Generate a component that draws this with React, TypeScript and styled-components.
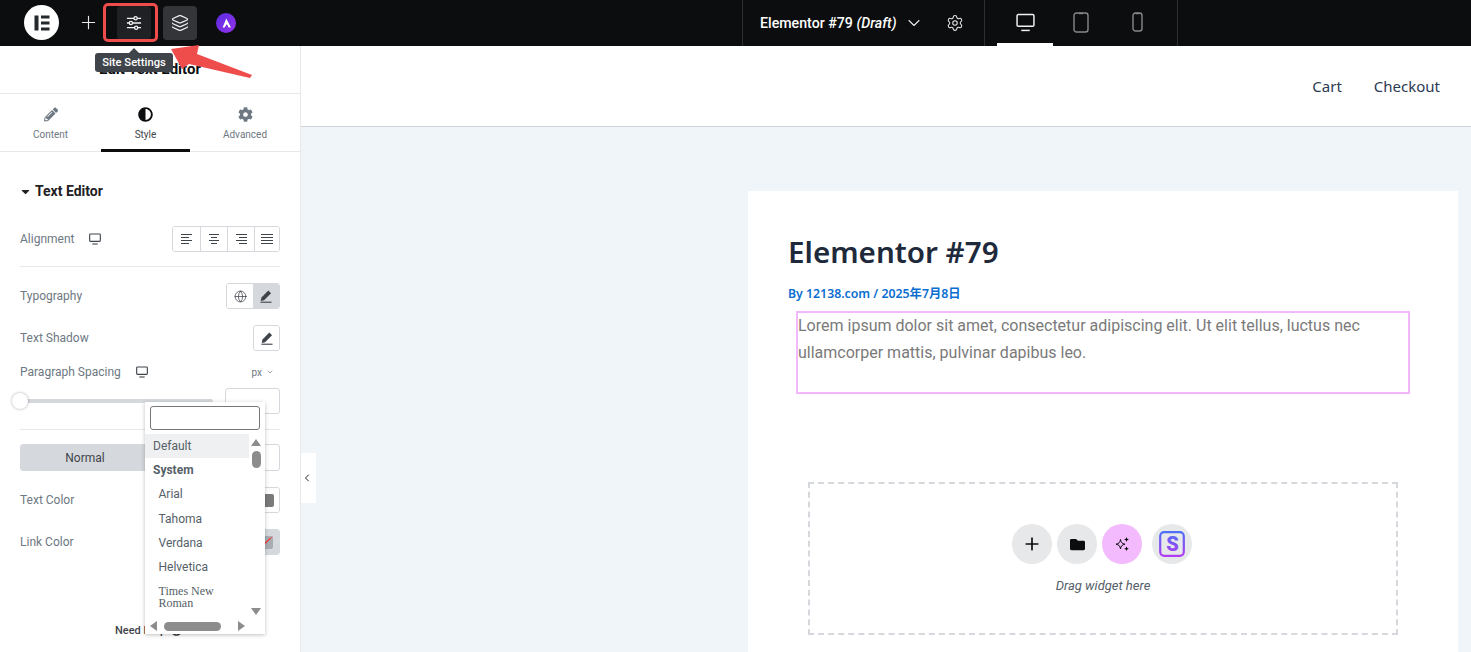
import React from 'react';
import styled, { createGlobalStyle } from 'styled-components';
import { Globe, Layers, Plus, Settings, ChevronDown, ChevronLeft } from 'lucide-react';
import { FaAdjust, FaCog, FaFolder, FaPencilAlt, FaCaretDown, FaQuestionCircle } from 'react-icons/fa';

const GlobalStyle = createGlobalStyle`
  html, body {
    margin: 0;
    height: 652px;
    overflow: hidden;
    background: #fff;
    font-family: Roboto, "Liberation Sans", sans-serif;
  }
  * { box-sizing: border-box; }
`;

const Page = styled.div`
  position: relative;
  width: 1471px;
  height: 652px;
  overflow: hidden;
  display: flex;
  flex-direction: column;
`;

const TopBar = styled.header`
  height: 46px;
  flex: none;
  background: #0c0d0e;
  display: flex;
  align-items: center;
  color: #fff;
`;

const ToolGroup = styled.div`
  width: 742px;
  height: 100%;
  display: flex;
  align-items: center;
  padding: 0 0 1px 24px;
`;

const LogoCircle = styled.div`
  width: 35px;
  height: 35px;
  border-radius: 50%;
  background: #fff;
  display: flex;
  align-items: center;
  justify-content: center;
  margin-right: 18px;
`;

const PlusButton = styled.div`
  width: 22px;
  display: flex;
  justify-content: center;
  color: #e6e8ea;
  margin-right: 18px;
`;

const ToolButton = styled.div<{ $bg: string }>`
  width: 34px;
  height: 34px;
  border-radius: 4px;
  background: ${(p) => p.$bg};
  display: flex;
  align-items: center;
  justify-content: center;
  margin-right: 12px;
  color: #f1f2f3;
`;

const AccentBadge = styled.div`
  width: 20px;
  height: 20px;
  border-radius: 50%;
  margin-left: 7px;
  background: linear-gradient(135deg, #5b2be0, #9333ea);
  display: flex;
  align-items: center;
  justify-content: center;
`;

const TitleGroup = styled.div`
  width: 242px;
  height: 100%;
  border-left: 1px solid #2d2f32;
  display: flex;
  align-items: center;
  padding: 0 0 1px 17px;
`;

const DocTitle = styled.div`
  font-size: 14.2px;
  font-weight: 500;
  white-space: nowrap;
  color: #fff;
  em { font-style: italic; }
`;

const TitleChevron = styled(ChevronDown)`
  flex: none;
  margin-left: 7px;
  color: #e6e8ea;
`;

const TitleGear = styled(Settings)`
  flex: none;
  margin-left: 22px;
  color: #e6e8ea;
`;

const DeviceGroup = styled.div`
  width: 194px;
  height: 100%;
  border-left: 1px solid #2d2f32;
  border-right: 1px solid #2d2f32;
  display: flex;
  padding-left: 12px;
`;

const DeviceTab = styled.div<{ $active?: boolean }>`
  width: 56px;
  height: 100%;
  display: flex;
  align-items: center;
  justify-content: center;
  color: ${(p) => (p.$active ? '#f1f2f3' : '#85888c')};
  border-bottom: 3px solid ${(p) => (p.$active ? '#fff' : 'transparent')};
  padding-top: 1px;
`;

const Body = styled.div`
  flex: 1;
  display: flex;
  min-height: 0;
`;

const Panel = styled.aside`
  position: relative;
  width: 301px;
  flex: none;
  background: #fff;
  border-right: 1px solid #e6e8ea;
`;

const PanelHeader = styled.div`
  height: 48px;
  border-bottom: 1px solid #e6e8ea;
  display: flex;
  align-items: center;
  justify-content: center;
  font-size: 15px;
  font-weight: 700;
  color: #0c0d0e;
  padding-bottom: 2px;
`;

const Tabs = styled.div`
  height: 58px;
  display: flex;
  border-bottom: 1px solid #e6e8ea;
`;

const Tab = styled.div<{ $active?: boolean; $w: number }>`
  width: ${(p) => p.$w}px;
  display: flex;
  flex-direction: column;
  align-items: center;
  padding-top: 13px;
  font-size: 10px;
  color: ${(p) => (p.$active ? '#3f444b' : '#6d7882')};
  border-bottom: 3px solid ${(p) => (p.$active ? '#0c0d0e' : 'transparent')};
  height: 58px;
  svg { color: ${(p) => (p.$active ? '#0c0d0e' : '#6d7882')}; height: 15px; margin-bottom: 7px; }
`;

const Section = styled.div`
  padding: 28px 20px 0;
`;

const SectionTitle = styled.div`
  height: 22px;
  display: flex;
  align-items: center;
  gap: 3.5px;
  font-size: 14px;
  font-weight: 700;
  color: #1f2124;
  svg { margin-left: -1.5px; }
`;

const Row = styled.div<{ $top: number }>`
  height: 26px;
  margin-top: ${(p) => p.$top}px;
  display: flex;
  align-items: center;
  justify-content: space-between;
`;

const LabelRow = styled.div<{ $top: number }>`
  height: 20px;
  margin-top: ${(p) => p.$top}px;
  display: flex;
  align-items: center;
  justify-content: space-between;
`;

const Label = styled.div`
  font-size: 12px;
  color: #6d7882;
  display: flex;
  align-items: center;
  gap: 15px;
`;

const UnitPick = styled.div`
  font-size: 10px;
  color: #6d7882;
  padding-right: 6px;
  display: flex;
  align-items: center;
  gap: 4px;
`;

const Divider = styled.div<{ $top: number }>`
  height: 1px;
  background: #e6e8ea;
  margin-top: ${(p) => p.$top}px;
`;

const ButtonGroup = styled.div`
  display: flex;
  height: 26px;
  border: 1px solid #d5d8dc;
  border-radius: 3px;
  overflow: hidden;
`;

const GroupButton = styled.div<{ $w: number; $on?: boolean; $sep?: boolean }>`
  width: ${(p) => p.$w}px;
  height: 100%;
  display: flex;
  align-items: center;
  justify-content: center;
  background: ${(p) => (p.$on ? '#d5d8dc' : '#fff')};
  border-left: ${(p) => (p.$sep ? '1px solid #d5d8dc' : 'none')};
  color: #3f444b;
`;

const SliderRow = styled.div`
  margin-top: 6px;
  height: 26px;
  display: flex;
  align-items: center;
  justify-content: space-between;
`;

const SliderTrack = styled.div`
  position: relative;
  width: 193px;
  height: 4px;
  border-radius: 2px;
  background: #d5d8dc;
`;

const SliderThumb = styled.div`
  position: absolute;
  left: -8px;
  top: -6px;
  width: 16px;
  height: 16px;
  border-radius: 50%;
  background: #fff;
  box-shadow: 0 0 3px rgba(0, 0, 0, 0.35);
`;

const NumberBox = styled.div`
  width: 55px;
  height: 26px;
  border: 1px solid #d5d8dc;
  border-radius: 3px;
`;

const StateTabs = styled.div`
  margin-top: 14px;
  height: 27px;
  display: flex;
`;

const StateTab = styled.div<{ $on?: boolean }>`
  flex: 1;
  display: flex;
  align-items: center;
  justify-content: center;
  font-size: 12px;
  color: ${(p) => (p.$on ? '#3f444b' : '#6d7882')};
  background: ${(p) => (p.$on ? '#d5d8dc' : '#fff')};
  border: 1px solid #d5d8dc;
  border-radius: ${(p) => (p.$on ? '3px 0 0 3px' : '0 3px 3px 0')};
`;

const Swatch = styled.div<{ $slashed?: boolean }>`
  width: 14px;
  height: 13px;
  border-radius: 2px;
  background: ${(p) =>
    p.$slashed
      ? 'linear-gradient(to top left, #a9adb2 47%, #ef4444 47%, #ef4444 53%, #a9adb2 53%)'
      : '#7a7a7a'};
`;

const HelpRow = styled.div`
  margin-top: 67px;
  height: 16px;
  margin-left: 95px;
  display: flex;
  align-items: center;
  gap: 5px;
  font-size: 11px;
  font-weight: 500;
  color: #3f444b;
  white-space: nowrap;
`;

const FontMenu = styled.div`
  position: absolute;
  left: 145px;
  top: 356px;
  width: 120px;
  height: 232px;
  background: #fff;
  box-shadow: 0 1px 4px rgba(0, 0, 0, 0.25);
  font-size: 12px;
  color: #556068;
  display: flex;
  flex-direction: column;
`;

const MenuSearch = styled.div`
  flex: none;
  margin: 4px 5px;
  height: 24px;
  border: 1px solid #767676;
  border-radius: 3px;
  background: #fff;
`;

const MenuBody = styled.div`
  flex: 1;
  min-height: 0;
  display: flex;
`;

const MenuList = styled.div`
  width: 104px;
  overflow: hidden;
`;

const MenuItem = styled.div<{ $on?: boolean; $head?: boolean; $indent?: boolean }>`
  height: 24.2px;
  display: flex;
  align-items: center;
  padding-left: ${(p) => (p.$indent ? 13.5 : 8)}px;
  background: ${(p) => (p.$on ? '#eff0f2' : 'transparent')};
  font-weight: ${(p) => (p.$head ? 700 : 400)};
`;

const SerifItem = styled.div`
  padding: 6px 0 0 13.5px;
  font-family: "Liberation Serif", serif;
  font-size: 12px;
  line-height: 12px;
  width: 80px;
`;

const VScroll = styled.div`
  width: 16px;
  display: flex;
  flex-direction: column;
  align-items: center;
  padding: 5px 2px 3px 0;
`;

const VThumb = styled.div`
  width: 9px;
  height: 17px;
  border-radius: 5px;
  background: #8c8c8c;
  margin-top: 5px;
`;

const Triangle = styled.div<{ $dir: 'up' | 'down' | 'left' | 'right' }>`
  width: 0;
  height: 0;
  flex: none;
  border-style: solid;
  border-color: transparent;
  ${(p) => {
    if (p.$dir === 'up') return 'border-width: 0 5px 7px; border-bottom-color: #8c8c8c;';
    if (p.$dir === 'down') return 'border-width: 7px 5px 0; border-top-color: #8c8c8c;';
    if (p.$dir === 'left') return 'border-width: 5px 7px 5px 0; border-right-color: #8c8c8c;';
    return 'border-width: 5px 0 5px 7px; border-left-color: #8c8c8c;';
  }}
`;

const Spacer = styled.div`
  flex: 1;
`;

const HScroll = styled.div`
  flex: none;
  height: 16px;
  display: flex;
  align-items: center;
  padding: 0 20px 0 5px;
  gap: 7px;
`;

const HThumb = styled.div`
  width: 57px;
  height: 9px;
  border-radius: 5px;
  background: #8c8c8c;
`;

const Preview = styled.main`
  position: relative;
  flex: 1;
  min-width: 0;
  display: flex;
  flex-direction: column;
  background: #f0f5f9;
`;

const CollapseTab = styled.div`
  position: absolute;
  left: 0;
  top: 407px;
  width: 15px;
  height: 50px;
  background: #fff;
  display: flex;
  align-items: center;
  justify-content: center;
  padding-right: 3px;
  color: #26292c;
`;

const SiteHeader = styled.div`
  height: 81px;
  flex: none;
  background: #fff;
  border-bottom: 1px solid #d1d5d9;
  display: flex;
  align-items: center;
  justify-content: flex-end;
  padding-right: 31px;
  gap: 32px;
  font-family: "Noto Sans", "Open Sans", sans-serif;
  font-size: 15px;
  color: #2c3a52;
`;

const Canvas = styled.div`
  flex: 1;
  min-height: 0;
  padding: 64px 13px 0 447px;
`;

const Card = styled.article`
  background: #fff;
  height: 100%;
  padding: 41px 40px 0;
`;

const PostTitle = styled.h1`
  margin: 0;
  height: 40px;
  line-height: 40px;
  font-family: "Noto Sans", "Open Sans", sans-serif;
  font-size: 29.6px;
  font-weight: 600;
  color: #1e293b;
  white-space: nowrap;
`;

const PostMeta = styled.div`
  margin-top: 12px;
  height: 20px;
  line-height: 20px;
  font-family: "Noto Sans", "Noto Sans CJK SC", sans-serif;
  font-size: 12.3px;
  font-weight: 600;
  color: #0a6ed1;
`;

const TextWidget = styled.div`
  margin: 7px 0 0 8px;
  width: 614px;
  height: 83px;
  padding: 1px 0 0 2px;
  box-shadow: inset 0 0 0 2px #f3b8fb;
  font-size: 16px;
  line-height: 27px;
  color: #7a7a7a;
`;

const DropZone = styled.div`
  margin: 88px 0 0 20px;
  width: 590px;
  height: 153px;
  border: 2px dashed #d5d8dc;
  display: flex;
  flex-direction: column;
  align-items: center;
  padding-top: 40px;
`;

const DropButtons = styled.div`
  display: flex;
  align-items: center;
  margin-left: -2px;
`;

const RoundButton = styled.div<{ $pink?: boolean; $gap?: number }>`
  width: 40px;
  height: 40px;
  border-radius: 50%;
  margin-left: ${(p) => p.$gap ?? 0}px;
  background: ${(p) => (p.$pink ? '#f3bafd' : '#e6e8ea')};
  color: #0c0d0e;
  display: flex;
  align-items: center;
  justify-content: center;
`;

const DropHint = styled.div`
  margin-top: 14px;
  font-size: 13px;
  line-height: 16px;
  font-style: italic;
  color: #556068;
`;

const Tooltip = styled.div`
  position: absolute;
  left: 95px;
  top: 53px;
  height: 19px;
  width: 78px;
  border-radius: 3px;
  background: #3f444b;
  color: #fff;
  font-size: 11.2px;
  font-weight: 500;
  display: flex;
  align-items: center;
  justify-content: center;
  white-space: nowrap;
  &::before {
    content: '';
    position: absolute;
    left: 34px;
    top: -5px;
    border-style: solid;
    border-width: 0 5px 5px;
    border-color: transparent transparent #3f444b;
  }
`;

const Highlight = styled.div`
  position: absolute;
  left: 103px;
  top: 3px;
  width: 55px;
  height: 39px;
  border: 3px solid #ef4c4c;
  border-radius: 5px;
`;

const ArrowMark = styled.svg`
  position: absolute;
  left: 165px;
  top: 40px;
  width: 95px;
  height: 42px;
`;

const ElementorMark = () => (
  <svg width="16" height="16" viewBox="0 0 16 16" fill="#26292c">
    <rect x="0.5" y="0.5" width="4" height="15" />
    <rect x="7" y="0.5" width="8.5" height="3" />
    <rect x="7" y="6.5" width="8.5" height="3" />
    <rect x="7" y="12.5" width="8.5" height="3" />
  </svg>
);

const SlidersMark = () => (
  <svg width="16" height="16" viewBox="0 0 17 17" fill="none" stroke="#f1f2f3" strokeWidth="1.4">
    <path d="M1 3.5h7.5M12 3.5h4M1 8.5h2.5M7 8.5h9M1 13.5h8M12.5 13.5h3.5" />
    <circle cx="10.2" cy="3.5" r="1.7" />
    <circle cx="5.2" cy="8.5" r="1.7" />
    <circle cx="10.8" cy="13.5" r="1.7" />
  </svg>
);

const MonitorMark = ({ size = 12, color = '#3f444b', width = 1.2 }: { size?: number; color?: string; width?: number }) => (
  <svg width={size} height={size} viewBox="0 0 18 18" fill="none" stroke={color} strokeWidth={width * 1.4}>
    <rect x="1" y="1.5" width="16" height="11" rx="1.2" />
    <path d="M5 16.5h8" />
  </svg>
);

const DeviceMark = ({ w, h }: { w: number; h: number }) => (
  <svg width={w} height={h} viewBox={`0 0 ${w} ${h}`} fill="none" stroke="currentColor" strokeWidth="1.4">
    <rect x="1" y="1" width={w - 2} height={h - 2} rx="2.5" />
    <path d={`M${w / 2 - 2} 1.5h4`} />
  </svg>
);

const AlignMark = ({ rows }: { rows: [number, number][] }) => (
  <svg width="12" height="10" viewBox="0 0 12 10" stroke="#3f444b" strokeWidth="1">
    {rows.map(([a, b], i) => (
      <line key={i} x1={a} x2={b} y1={0.5 + i * 3} y2={0.5 + i * 3} />
    ))}
  </svg>
);

const PenLine = () => (
  <svg width="12" height="13" viewBox="0 0 13 14" fill="#3f444b">
    <path d="M9 .6l3 3-7.6 7.5-3.6.8.8-3.7z" />
    <rect x="0.5" y="12.6" width="12" height="1.2" />
  </svg>
);

const SparkMark = () => (
  <svg width="16" height="16" viewBox="0 0 16 16" fill="#0c0d0e">
    <path
      d="M6.5 3.5C7 6.5 8 7.6 11 8.2 8 8.8 7 9.9 6.5 12.9 6 9.9 5 8.8 2 8.2 5 7.6 6 6.5 6.5 3.5z"
      fill="none"
      stroke="#0c0d0e"
      strokeWidth="1"
    />
    <path d="M12.5 1l.7 1.8 1.8.7-1.8.7-.7 1.8-.7-1.8-1.8-.7 1.8-.7zM12.5 10.5l.7 1.6 1.6.7-1.6.7-.7 1.6-.7-1.6-1.6-.7 1.6-.7z" />
  </svg>
);

const StudioMark = () => (
  <svg width="26" height="26" viewBox="0 0 26 26">
    <defs>
      <linearGradient id="studio" x1="0" y1="0" x2="0" y2="1">
        <stop offset="0" stopColor="#4f6ef7" />
        <stop offset="1" stopColor="#b13cf2" />
      </linearGradient>
    </defs>
    <rect x="1.2" y="1.2" width="23.6" height="23.6" rx="4" fill="none" stroke="url(#studio)" strokeWidth="2.2" />
    <text x="13.5" y="20" textAnchor="middle" fontFamily="Roboto, sans-serif" fontWeight="900" fontSize="20" fill="url(#studio)">
      S
    </text>
  </svg>
);

const AccentMark = () => (
  <svg width="12" height="12" viewBox="0 0 12 12" fill="#fff">
    <path d="M6.3 1.5L11 10.5H8.6L6.9 7 4.6 10.5H2.6z" />
  </svg>
);

const fontRows = ['Arial', 'Tahoma', 'Verdana', 'Helvetica'];

export default function App() {
  return (
    <Page>
      <GlobalStyle />
      <TopBar>
        <ToolGroup>
          <LogoCircle>
            <ElementorMark />
          </LogoCircle>
          <PlusButton>
            <Plus size={21} strokeWidth={1.3} />
          </PlusButton>
          <ToolButton $bg="#1f2124">
            <SlidersMark />
          </ToolButton>
          <ToolButton $bg="#333539">
            <Layers size={18} strokeWidth={1.5} />
          </ToolButton>
          <AccentBadge>
            <AccentMark />
          </AccentBadge>
        </ToolGroup>
        <TitleGroup>
          <DocTitle>
            Elementor #79 <em>(Draft)</em>
          </DocTitle>
          <TitleChevron size={20} strokeWidth={1.3} />
          <TitleGear size={18} strokeWidth={1.4} />
        </TitleGroup>
        <DeviceGroup>
          <DeviceTab $active>
            <MonitorMark size={19} color="#f1f2f3" width={1} />
          </DeviceTab>
          <DeviceTab>
            <DeviceMark w={16} h={21} />
          </DeviceTab>
          <DeviceTab>
            <DeviceMark w={11} h={20} />
          </DeviceTab>
        </DeviceGroup>
      </TopBar>

      <Body>
        <Panel>
          <PanelHeader>Edit Text Editor</PanelHeader>
          <Tabs>
            <Tab $w={101}>
              <FaPencilAlt size={14} />
              Content
            </Tab>
            <Tab $w={89} $active>
              <FaAdjust size={15} />
              Style
            </Tab>
            <Tab $w={110}>
              <FaCog size={15} />
              Advanced
            </Tab>
          </Tabs>
          <Section>
            <SectionTitle>
              <FaCaretDown size={13} />
              Text Editor
            </SectionTitle>
            <Row $top={24}>
              <Label>
                Alignment
                <MonitorMark />
              </Label>
              <ButtonGroup>
                <GroupButton $w={27}>
                  <AlignMark rows={[[0, 11], [0, 8], [0, 11], [0, 8]]} />
                </GroupButton>
                <GroupButton $w={27} $sep>
                  <AlignMark rows={[[1, 11], [3, 9], [1, 11], [3, 9]]} />
                </GroupButton>
                <GroupButton $w={27} $sep>
                  <AlignMark rows={[[1, 12], [4, 12], [1, 12], [4, 12]]} />
                </GroupButton>
                <GroupButton $w={25} $sep>
                  <AlignMark rows={[[0, 12], [0, 12], [0, 12], [0, 12]]} />
                </GroupButton>
              </ButtonGroup>
            </Row>
            <Divider $top={14} />
            <Row $top={16}>
              <Label>Typography</Label>
              <ButtonGroup>
                <GroupButton $w={26}>
                  <Globe size={13} strokeWidth={1.4} />
                </GroupButton>
                <GroupButton $w={26} $on>
                  <PenLine />
                </GroupButton>
              </ButtonGroup>
            </Row>
            <Row $top={16}>
              <Label>Text Shadow</Label>
              <ButtonGroup>
                <GroupButton $w={25}>
                  <PenLine />
                </GroupButton>
              </ButtonGroup>
            </Row>
            <LabelRow $top={11}>
              <Label>
                Paragraph Spacing
                <MonitorMark />
              </Label>
              <UnitPick>
                px
                <ChevronDown size={8} strokeWidth={2} />
              </UnitPick>
            </LabelRow>
            <SliderRow>
              <SliderTrack>
                <SliderThumb />
              </SliderTrack>
              <NumberBox />
            </SliderRow>
            <Divider $top={15} />
            <StateTabs>
              <StateTab $on>Normal</StateTab>
              <StateTab>Hover</StateTab>
            </StateTabs>
            <Row $top={16}>
              <Label>Text Color</Label>
              <ButtonGroup>
                <GroupButton $w={26}>
                  <Globe size={13} strokeWidth={1.4} />
                </GroupButton>
                <GroupButton $w={26} $sep>
                  <Swatch />
                </GroupButton>
              </ButtonGroup>
            </Row>
            <Row $top={16}>
              <Label>Link Color</Label>
              <ButtonGroup>
                <GroupButton $w={26}>
                  <Globe size={13} strokeWidth={1.4} />
                </GroupButton>
                <GroupButton $w={26} $on>
                  <Swatch $slashed />
                </GroupButton>
              </ButtonGroup>
            </Row>
            <HelpRow>
              Need Help
              <FaQuestionCircle size={11} />
            </HelpRow>
          </Section>
          <FontMenu>
            <MenuSearch />
            <MenuBody>
              <MenuList>
                <MenuItem $on>Default</MenuItem>
                <MenuItem $head>System</MenuItem>
                {fontRows.map((name) => (
                  <MenuItem key={name} $indent>
                    {name}
                  </MenuItem>
                ))}
                <SerifItem>Times New Roman</SerifItem>
              </MenuList>
              <VScroll>
                <Triangle $dir="up" />
                <VThumb />
                <Spacer />
                <Triangle $dir="down" />
              </VScroll>
            </MenuBody>
            <HScroll>
              <Triangle $dir="left" />
              <HThumb />
              <Spacer />
              <Triangle $dir="right" />
            </HScroll>
          </FontMenu>
        </Panel>

        <Preview>
          <CollapseTab>
            <ChevronLeft size={12} strokeWidth={2} />
          </CollapseTab>
          <SiteHeader>
            <span>Cart</span>
            <span>Checkout</span>
          </SiteHeader>
          <Canvas>
            <Card>
              <PostTitle>Elementor #79</PostTitle>
              <PostMeta>By 12138.com / 2025年7月8日</PostMeta>
              <TextWidget>
                Lorem ipsum dolor sit amet, consectetur adipiscing elit. Ut elit tellus, luctus nec ullamcorper mattis,
                pulvinar dapibus leo.
              </TextWidget>
              <DropZone>
                <DropButtons>
                  <RoundButton>
                    <Plus size={20} strokeWidth={2} />
                  </RoundButton>
                  <RoundButton $gap={5}>
                    <FaFolder size={15} />
                  </RoundButton>
                  <RoundButton $pink $gap={5}>
                    <SparkMark />
                  </RoundButton>
                  <RoundButton $gap={10}>
                    <StudioMark />
                  </RoundButton>
                </DropButtons>
                <DropHint>Drag widget here</DropHint>
              </DropZone>
            </Card>
          </Canvas>
        </Preview>
      </Body>

      <Tooltip>Site Settings</Tooltip>
      <Highlight />
      <ArrowMark viewBox="0 0 95 42">
        <path d="M6 9L34 5 32 14 87 35 85 38 24 24 17 29z" fill="#ef4c4c" />
      </ArrowMark>
    </Page>
  );
}
